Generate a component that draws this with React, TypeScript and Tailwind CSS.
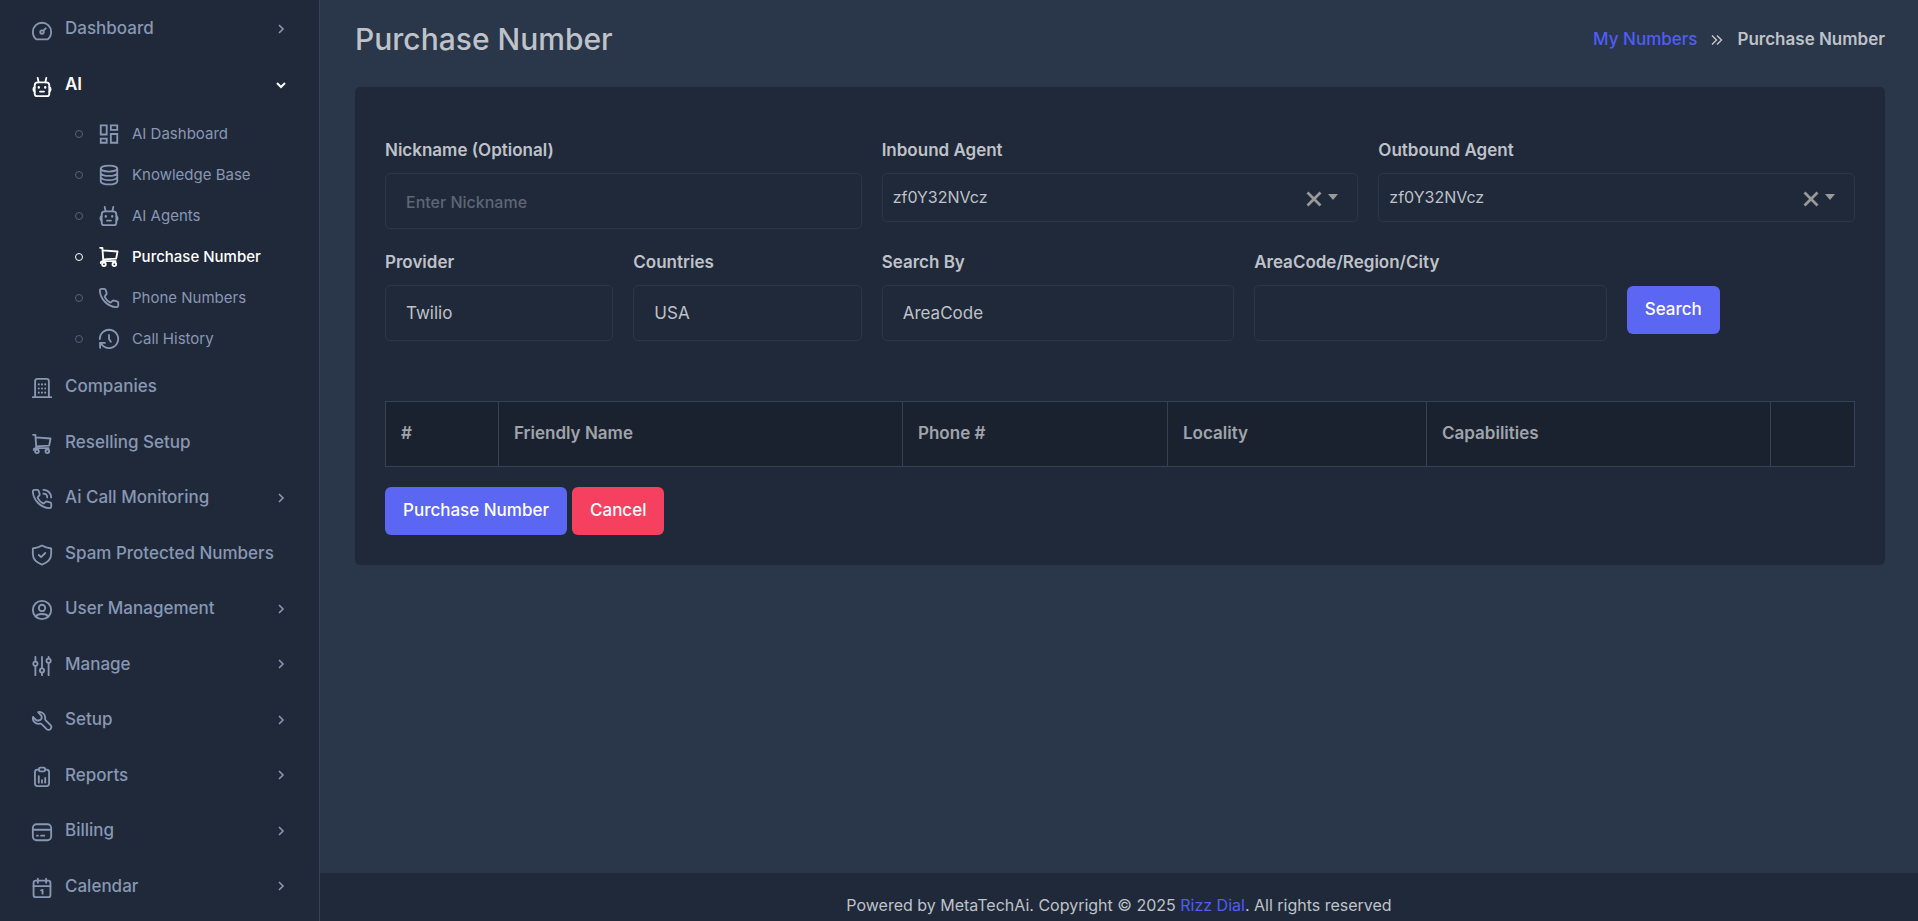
import { useState, type ReactNode } from "react";

function Icon({ children, className = "" }: { children: ReactNode; className?: string }) {
  return (
    <svg
      viewBox="0 0 24 24"
      className={`size-[22px] shrink-0 ${className}`}
      fill="none"
      stroke="currentColor"
      strokeWidth="2"
      strokeLinecap="round"
      strokeLinejoin="round"
      aria-hidden="true"
    >
      {children}
    </svg>
  );
}

const gauge = (
  <>
    <path d="M6 21.2h12c2.600-2 4-4.700 4-8.200a10 10 0 0 0-20 0c0 3.500 1.400 6.200 4 8.200Z" />
    <circle cx="12" cy="13.200" r="1.900" />
    <path d="m13.500 11.700 2.600-2.600" />
  </>
);

const robot = (
  <>
    <path d="M7.500 7h9c2.200 0 3.500 1.300 3.500 3.500v8.500c0 1.900-.8 3-2.700 3H6.700C4.800 22 4 20.900 4 19v-8.500C4 8.300 5.300 7 7.500 7Z" />
    <path d="M8.300 6.800 7.300 2M15.700 6.800l1-4.800M4 12c-1.100.7-1.400 1.600-1.400 2.700s.3 1.900 1.400 2.500M20 12c1.100.7 1.400 1.600 1.400 2.700s-.3 1.900-1.400 2.500M9.800 17h4.400" />
    <path d="M8.500 12.200v.4M15.500 12.200v.4" strokeWidth="2.600" />
  </>
);

const tiles = (
  <g strokeLinejoin="miter">
    <path d="M3 2.500h6.500v10H3zM14 2.500h7v5h-7zM3 17h6.500v4.500H3zM14 12h7v9.500h-7z" />
  </g>
);

const database = (
  <>
    <ellipse cx="12" cy="5" rx="9" ry="3.300" />
    <path d="M3 5v14c0 1.800 4 3.300 9 3.300s9-1.500 9-3.300V5M21 9.700c0 1.800-4 3.300-9 3.300s-9-1.500-9-3.300M21 14.300c0 1.800-4 3.300-9 3.300s-9-1.500-9-3.300" />
  </>
);

const cart = (
  <>
    <path d="M2.300 2h2.500l1 14.500h13.400M5 4.800l16.300 1.200-1.500 7.800-14.100.8" />
    <circle cx="6.500" cy="20" r="2" />
    <circle cx="17.800" cy="20" r="2" />
    <path d="M5.800 16.500c-1.800 0-2.800.8-2.800 2" />
  </>
);

const phone = (
  <path d="M3.800 2h2.900c.9 0 1.600.5 1.800 1.300l.9 3.200c.2.700 0 1.400-.5 1.900L7.600 9.800c-.3.300-.4.800-.2 1.200a14 14 0 0 0 5.700 5.800c.4.200.8.100 1.200-.2l1.300-1.300c.5-.5 1.200-.7 1.900-.5l3.300.9c.8.200 1.300.9 1.300 1.700V20a2 2 0 0 1-2.200 2C10.600 21.400 2.700 13.500 2 4.100 1.900 3 2.700 2 3.800 2Z" />
);

const history = (
  <>
    <path d="M2 12a10 10 0 1 1 3.800 7.800L2.300 16.300" />
    <path d="M7.500 16.300H2.300v5.200M12 7.500V12l2 3" />
  </>
);

const building = (
  <>
    <path d="M4.500 22V4.500C4.500 3 5.500 2 7 2h10c1.500 0 2.500 1 2.500 2.500V22M2 22h20" />
    <path
      d="M8.500 8v.1M12 8v.1M15.500 8v.1M8.500 12.500v.1M12 12.500v.1M15.500 12.500v.1M8.500 17v.1M12 17v.1M15.500 17v.1"
      strokeWidth="2.200"
    />
  </>
);

const phoneCall = (
  <>
    {phone}
    <path d="M13.500 2c4.700 0 8.500 3.600 8.500 8.300M13.500 6.200c2.400 0 4.200 1.700 4.200 4.100" />
  </>
);

const shield = (
  <>
    <path d="M12 1.700c2.800 1.800 6 2.800 10 3.200v5.800c0 6-3.600 9.600-10 11.700C5.600 20.300 2 16.700 2 10.700V4.900c4-.4 7.200-1.400 10-3.200Z" />
    <path d="m8.500 12 2.500 2.400 4.600-4.600" />
  </>
);

const user = (
  <>
    <circle cx="12" cy="12" r="10" />
    <circle cx="12" cy="9.800" r="3.500" />
    <path d="M5.500 19.300c.6-2 2.300-2.900 6.500-2.900s5.900.9 6.500 2.900" />
  </>
);

const sliders = (
  <>
    <path d="M4.800 2v5M4.800 12V22M12 2v12.300M12 19.300V22M19.200 9v13M19.200 2v1.500" />
    <circle cx="4.800" cy="9.500" r="2.300" />
    <circle cx="12" cy="16.800" r="2.300" />
    <circle cx="19.200" cy="6.200" r="2.300" />
  </>
);

const wrench = (
  <path d="M7.800 2.300c3.900-.9 8 2.400 7.600 6.600-.1.900-.2 1.500.4 2.100l5.500 5.600c2.600 2.600-1.500 7-4.200 4.300l-5.500-5.600c-.7-.7-1.200-.6-2.100-.4-4.600 1-8.400-3.100-7.300-7.300L5.800 11.200c2.300.5 4.800-.4 5.400-1.400.5-.9.600-2.700-.2-4L7.800 2.300Z" />
);

const report = (
  <>
    <path d="M8.500 4H7C5.300 4 4.300 5 4.300 6.800v12.400c0 1.900 1 2.800 2.700 2.800h10c1.700 0 2.700-.9 2.700-2.800V6.800C19.700 5 18.700 4 17 4h-1.500" />
    <path d="M10.200 1.800h3.600c2.200 0 2.200 4 0 4h-3.600c-2.200 0-2.200-4 0-4ZM8.500 11v7.200M12 15.500v2.700M15.500 13v5.200" />
  </>
);

const card = (
  <>
    <rect x="2" y="3.500" width="20" height="17.500" rx="4" />
    <path d="M2 9.500h20M6.500 16h1M11 16h3.500" />
  </>
);

const calendar = (
  <>
    <rect x="2.800" y="4" width="18.400" height="18" rx="2.500" />
    <path d="M2.800 10h18.400M7.500 1.800v4.500M16.500 1.800v4.500M11 14.500l1.600-.5v4.200" />
  </>
);

function Chevron({ down = false }: { down?: boolean }) {
  return (
    <svg
      viewBox="0 0 12 12"
      className="ml-auto size-3 shrink-0"
      fill="none"
      stroke="currentColor"
      strokeWidth={down ? "2" : "1.6"}
      aria-hidden="true"
    >
      <path d={down ? "M2 4l4 4 4-4" : "M4 2l4 4-4 4"} />
    </svg>
  );
}

const subItems = [
  { label: "AI Dashboard", icon: tiles },
  { label: "Knowledge Base", icon: database },
  { label: "AI Agents", icon: robot },
  { label: "Purchase Number", icon: cart, active: true },
  { label: "Phone Numbers", icon: phone },
  { label: "Call History", icon: history },
];

const lowerItems = [
  { label: "Companies", icon: building },
  { label: "Reselling Setup", icon: cart },
  { label: "Ai Call Monitoring", icon: phoneCall, expandable: true },
  { label: "Spam Protected Numbers", icon: shield },
  { label: "User Management", icon: user, expandable: true },
  { label: "Manage", icon: sliders, expandable: true },
  { label: "Setup", icon: wrench, expandable: true },
  { label: "Reports", icon: report, expandable: true },
  { label: "Billing", icon: card, expandable: true },
  { label: "Calendar", icon: calendar, expandable: true },
];

function MenuLink({ label, icon, expandable, open }: { label: string; icon: ReactNode; expandable?: boolean; open?: boolean }) {
  return (
    <a
      href="#"
      className={`flex h-full min-h-12 items-center pr-8 pl-[31px] text-[17px] whitespace-nowrap ${
        open ? "font-semibold text-white" : "font-medium"
      }`}
    >
      <Icon className="mt-[3px] mr-3">{icon}</Icon>
      {label}
      {expandable && <Chevron down={open} />}
    </a>
  );
}

function Sidebar() {
  return (
    <aside className="sticky top-0 flex h-screen w-80 shrink-0 flex-col overflow-hidden border-r border-[#36435a] bg-[#1f293a] pt-px pb-[7px] text-[#8997b3]">
      <nav className="flex min-h-0 flex-1 flex-col">
        <ul className="shrink-0">
          <li className="h-14">
            <MenuLink label="Dashboard" icon={gauge} expandable />
          </li>
          <li>
            <div className="h-14">
              <MenuLink label="AI" icon={robot} expandable open />
            </div>
            <ul>
              {subItems.map((item) => (
                <li key={item.label}>
                  <a
                    href="#"
                    className={`flex h-[41px] items-center pl-[75px] text-[15px] whitespace-nowrap ${
                      item.active ? "font-medium text-white" : ""
                    }`}
                  >
                    <span
                      className={`mr-[15px] size-2 shrink-0 rounded-full border ${
                        item.active ? "border-white" : "border-[#566179]"
                      }`}
                    />
                    <Icon className="mr-3">{item.icon}</Icon>
                    <span className="pt-0.5">{item.label}</span>
                  </a>
                </li>
              ))}
            </ul>
          </li>
        </ul>
        <ul className="grid flex-1 auto-rows-fr">
          {lowerItems.map((item) => (
            <li key={item.label}>
              <MenuLink {...item} />
            </li>
          ))}
        </ul>
      </nav>
    </aside>
  );
}

const fieldClass =
  "block h-14 w-full appearance-none rounded-[5px] border border-[#2a364a] bg-transparent px-5 pt-0.5 text-[17px] text-[#bfc2c8] outline-none placeholder:text-base placeholder:font-medium placeholder:text-[#5d6675]";

function Field({ id, label, className, children }: { id: string; label: string; className: string; children: ReactNode }) {
  return (
    <div className={className}>
      <label htmlFor={id} className="mb-2.5 block text-[17px] leading-[26px] font-semibold">
        {label}
      </label>
      {children}
    </div>
  );
}

function AgentSelect({ id, label }: { id: string; label: string }) {
  const [value, setValue] = useState("zf0Y32NVcz");
  return (
    <Field id={id} label={label} className="col-span-4">
      <div className="relative">
        <select
          id={id}
          value={value}
          onChange={(e) => setValue(e.target.value)}
          className="block h-[49px] w-full appearance-none rounded-[5px] border border-[#2a364a] bg-transparent px-2.5 pb-0.5 text-base text-[#bfc2c8] outline-none"
        >
          <option value="" />
          <option value="zf0Y32NVcz">zf0Y32NVcz</option>
        </select>
        <div className="absolute inset-y-0 right-5 flex items-center gap-1.5 pt-0.5 text-[#999]">
          <button type="button" aria-label={`Clear ${label}`} onClick={() => setValue("")}>
            <svg viewBox="0 0 16 16" className="size-4" fill="none" stroke="currentColor" strokeWidth="2.800">
              <path d="M1.500 1.500l13 13M14.500 1.500l-13 13" />
            </svg>
          </button>
          <svg viewBox="0 0 10 6" className="mb-1 h-1.5 w-2.5" fill="currentColor" aria-hidden="true">
            <path d="M0 0h10L5 6z" />
          </svg>
        </div>
      </div>
    </Field>
  );
}

const buttonClass = "h-12 rounded-md px-[18px] text-[17px] font-medium text-white";

const columns = [
  { label: "#", width: "w-[113px]" },
  { label: "Friendly Name", width: "w-[404px]" },
  { label: "Phone #", width: "w-[265px]" },
  { label: "Locality", width: "w-[259px]" },
  { label: "Capabilities", width: "w-[344px]" },
  { label: "", width: "w-[84px]" },
];

export default function App() {
  return (
    <div className="flex min-h-screen bg-[#2a3649] font-['Inter',sans-serif] text-[#bfc2c8]">
      <Sidebar />
      <div className="flex min-w-0 flex-1 flex-col">
        <main className="flex-1 pr-[33px] pl-[35px]">
          <header className="flex h-[87px] items-center justify-between pb-2">
            <h1 className="text-[30px] font-medium">Purchase Number</h1>
            <nav aria-label="Breadcrumb" className="flex items-center text-[17px]">
              <a href="#" className="font-medium text-[#4f5ef5]">
                My Numbers
              </a>
              <svg
                viewBox="0 0 12 12"
                className="mx-[14px] size-3"
                fill="none"
                stroke="currentColor"
                strokeWidth="1.5"
                aria-hidden="true"
              >
                <path d="M1 1.500 5.500 6 1 10.500M6 1.500 10.500 6 6 10.500" />
              </svg>
              <span className="font-semibold">Purchase Number</span>
            </nav>
          </header>

          <form className="rounded-[5px] bg-[#1f293a] px-[30px] pt-[50px] pb-[30px]" onSubmit={(e) => e.preventDefault()}>
            <div className="grid grid-cols-12 items-start gap-x-5 gap-y-5">
              <Field id="nickname" label="Nickname (Optional)" className="col-span-4">
                <input id="nickname" type="text" placeholder="Enter Nickname" className={fieldClass} />
              </Field>
              <AgentSelect id="inbound" label="Inbound Agent" />
              <AgentSelect id="outbound" label="Outbound Agent" />

              <Field id="provider" label="Provider" className="col-span-2">
                <select id="provider" className={fieldClass}>
                  <option>Twilio</option>
                </select>
              </Field>
              <Field id="country" label="Countries" className="col-span-2">
                <select id="country" className={fieldClass}>
                  <option>USA</option>
                </select>
              </Field>
              <Field id="search-by" label="Search By" className="col-span-3">
                <select id="search-by" className={fieldClass}>
                  <option>AreaCode</option>
                </select>
              </Field>
              <Field id="area" label="AreaCode/Region/City" className="col-span-3">
                <input id="area" type="text" className={fieldClass} />
              </Field>
              <div className="col-span-2 pt-[37px]">
                <button type="submit" className={`${buttonClass} bg-[#5b66f3]`}>
                  Search
                </button>
              </div>
            </div>

            <table className="mt-[60px] w-full table-fixed border-collapse text-left">
              <thead>
                <tr className="h-[65px] bg-[#1a2230]">
                  {columns.map((column) => (
                    <th
                      key={column.label}
                      scope="col"
                      className={`border border-[#364153] px-[15px] text-[17px] font-semibold text-[#a0a4aa] ${column.width}`}
                    >
                      {column.label}
                    </th>
                  ))}
                </tr>
              </thead>
            </table>

            <div className="mt-5 flex gap-[5px]">
              <button type="button" className={`${buttonClass} bg-[#5b66f3]`}>
                Purchase Number
              </button>
              <button type="button" className={`${buttonClass} bg-[#f6405f]`}>
                Cancel
              </button>
            </div>
          </form>
        </main>

        <footer className="h-12 bg-[#1f293a] pt-5 text-center text-base">
          Powered by MetaTechAi. Copyright © 2025{" "}
          <a href="#" className="text-[#4f5ef5]">
            Rizz Dial
          </a>
          . All rights reserved
        </footer>
      </div>
    </div>
  );
}
